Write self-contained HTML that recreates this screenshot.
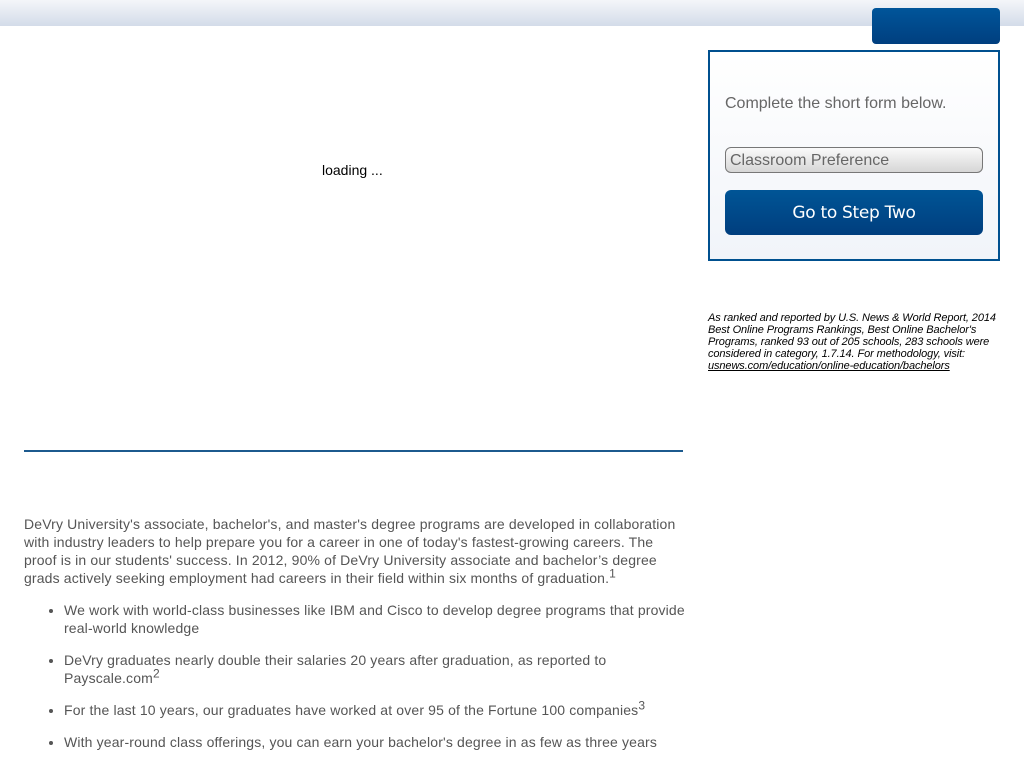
<!DOCTYPE html>
<html><head><style>
body{margin:0;width:1024px;height:768px;overflow:hidden;background:#fff;font-family:"Liberation Sans",sans-serif;position:relative}
.top{position:absolute;left:0;top:0;width:1024px;height:26px;background:linear-gradient(#f4f6f9,#d3dce9)}
.tb{position:absolute;left:872px;top:8px;width:128px;height:36px;border-radius:4px;background:linear-gradient(#00559a,#003f7f)}
.box{position:absolute;left:708px;top:50px;width:288px;height:207px;border:2px solid #00508f;background:linear-gradient(#fff,#f1f4f9)}
.box p{position:absolute;left:15px;top:43px;margin:0;font-size:16px;color:#666}
.sel{position:absolute;left:15px;top:95px;height:26px;border:1px solid #777;border-radius:6px;background:linear-gradient(#fafafa,#d6d6d6);font-size:16px;color:#666;line-height:25px;padding-left:4px;box-sizing:border-box;width:258px}
.btn{position:absolute;left:15px;top:138px;width:258px;height:45px;border-radius:6px;background:linear-gradient(#005596,#003e7e);color:#fff;font-size:17px;text-align:center;line-height:47px;font-family:"DejaVu Sans",sans-serif;letter-spacing:-0.3px}
.note{position:absolute;left:708px;top:312px;width:300px;font-size:11px;font-style:italic;line-height:12px;color:#000;letter-spacing:-0.1px}
.load{position:absolute;left:322px;top:162px;font-size:14px}
.hr{position:absolute;left:24px;top:450px;width:659px;height:2px;background:#1c5a8e}
.txt{position:absolute;left:24px;top:515px;width:662px;font-size:14px;line-height:18px;color:#555;letter-spacing:0.15px}
.txt p{margin:0 0 14px}
ul{margin:0;padding-left:40px}
li{margin-bottom:14px}
sup{font-size:12px;line-height:0}
</style></head><body>
<div class="top"></div><div class="tb"></div>
<div class="box"><p>Complete the short form below.</p><div class="sel">Classroom Preference</div><div class="btn">Go to Step Two</div></div>
<div class="note">As ranked and reported by U.S. News &amp; World Report, 2014 Best Online Programs Rankings, Best Online Bachelor's Programs, ranked 93 out of 205 schools, 283 schools were considered in category, 1.7.14. For methodology, visit: <u>usnews.com/education/online-education/bachelors</u></div>
<div class="load">loading ...</div>
<div class="hr"></div>
<div class="txt"><p>DeVry University's associate, bachelor's, and master's degree programs are developed in collaboration with industry leaders to help prepare you for a career in one of today's fastest-growing careers. The proof is in our students' success. In 2012, 90% of DeVry University associate and bachelor’s degree grads actively seeking employment had careers in their field within six months of graduation.<sup>1</sup></p>
<ul><li>We work with world-class businesses like IBM and Cisco to develop degree programs that provide real-world knowledge</li>
<li>DeVry graduates nearly double their salaries 20 years after graduation, as reported to Payscale.com<sup>2</sup></li>
<li>For the last 10 years, our graduates have worked at over 95 of the Fortune 100 companies<sup>3</sup></li>
<li>With year-round class offerings, you can earn your bachelor's degree in as few as three years</li></ul></div>
</body></html>
